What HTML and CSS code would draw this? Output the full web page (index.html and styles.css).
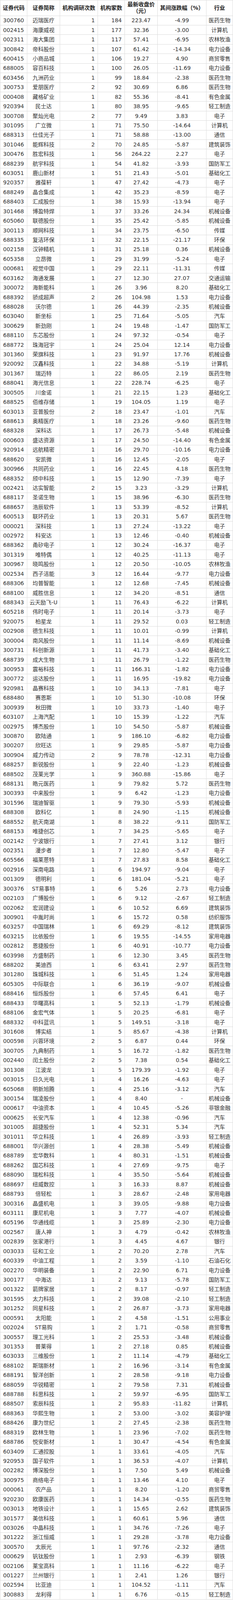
FILE: index.html
```html
<!DOCTYPE html>
<html lang="zh-CN">
<head>
<meta charset="utf-8">
<title>机构调研统计</title>
<link rel="stylesheet" href="styles.css">
</head>
<body>
<table class="survey">
<colgroup>
<col class="c-code"><col class="c-name"><col class="c-times"><col class="c-orgs"><col class="c-price"><col class="c-chg"><col class="c-ind">
</colgroup>
<thead>
<tr><th>证券代码</th><th>证券简称</th><th>机构调研次数</th><th>机构家数</th><th>最新收盘价（元）</th><th class="nowrap">其间涨跌幅（%）</th><th>行业</th></tr>
</thead>
<tbody>
<tr><td>300760</td><td>迈瑞医疗</td><td>1</td><td>184</td><td>223.47</td><td>-4.99</td><td>医药生物</td></tr>
<tr><td>002415</td><td>海康威视</td><td>1</td><td>177</td><td>32.36</td><td>-3.00</td><td>计算机</td></tr>
<tr><td>002311</td><td>海大集团</td><td>1</td><td>117</td><td>57.41</td><td>-6.95</td><td>农林牧渔</td></tr>
<tr><td>300842</td><td>帝科股份</td><td>1</td><td>107</td><td>61.42</td><td>-14.34</td><td>电力设备</td></tr>
<tr><td>600415</td><td>小商品城</td><td>1</td><td>106</td><td>19.27</td><td>4.90</td><td>商贸零售</td></tr>
<tr><td>688005</td><td>容百科技</td><td>1</td><td>100</td><td>26.05</td><td>-11.69</td><td>电力设备</td></tr>
<tr><td>603456</td><td>九洲药业</td><td>1</td><td>99</td><td>18.84</td><td>-2.38</td><td>医药生物</td></tr>
<tr><td>300753</td><td>爱朋医疗</td><td>2</td><td>92</td><td>30.69</td><td>6.86</td><td>医药生物</td></tr>
<tr><td>000408</td><td>藏格矿业</td><td>1</td><td>82</td><td>55.36</td><td>-8.41</td><td>有色金属</td></tr>
<tr><td>920394</td><td>民士达</td><td>1</td><td>80</td><td>38.95</td><td>-9.65</td><td>轻工制造</td></tr>
<tr><td>300708</td><td>聚灿光电</td><td>2</td><td>77</td><td>9.49</td><td>3.83</td><td>电子</td></tr>
<tr><td>301095</td><td>广立微</td><td>1</td><td>71</td><td>75.50</td><td>-14.64</td><td>计算机</td></tr>
<tr><td>688313</td><td>仕佳光子</td><td>1</td><td>71</td><td>58.88</td><td>-13.00</td><td>通信</td></tr>
<tr><td>301046</td><td>能辉科技</td><td>2</td><td>70</td><td>24.85</td><td>-5.87</td><td>建筑装饰</td></tr>
<tr><td>300476</td><td>胜宏科技</td><td>1</td><td>56</td><td>264.22</td><td>2.27</td><td>电子</td></tr>
<tr><td>688239</td><td>航宇科技</td><td>1</td><td>54</td><td>41.82</td><td>-3.93</td><td>国防军工</td></tr>
<tr><td>603051</td><td>鹿山新材</td><td>1</td><td>51</td><td>21.43</td><td>-5.01</td><td>基础化工</td></tr>
<tr><td>920357</td><td>雅葆轩</td><td>1</td><td>47</td><td>27.42</td><td>-4.73</td><td>电子</td></tr>
<tr><td>688249</td><td>晶合集成</td><td>1</td><td>42</td><td>35.23</td><td>-8.59</td><td>电子</td></tr>
<tr><td>688403</td><td>汇成股份</td><td>1</td><td>38</td><td>15.93</td><td>-13.94</td><td>电子</td></tr>
<tr><td>301468</td><td>博盈特焊</td><td>1</td><td>37</td><td>33.26</td><td>24.34</td><td>机械设备</td></tr>
<tr><td>605060</td><td>联德股份</td><td>1</td><td>35</td><td>25.42</td><td>-5.85</td><td>机械设备</td></tr>
<tr><td>300113</td><td>顺网科技</td><td>1</td><td>34</td><td>23.75</td><td>-6.50</td><td>传媒</td></tr>
<tr><td>688335</td><td>复洁环保</td><td>1</td><td>32</td><td>22.15</td><td>-21.17</td><td>环保</td></tr>
<tr><td>002158</td><td>汉钟精机</td><td>1</td><td>31</td><td>25.18</td><td>0.36</td><td>机械设备</td></tr>
<tr><td>605358</td><td>立昂微</td><td>1</td><td>29</td><td>31.99</td><td>-5.24</td><td>电子</td></tr>
<tr><td>000681</td><td>视觉中国</td><td>1</td><td>29</td><td>22.11</td><td>-11.31</td><td>传媒</td></tr>
<tr><td>603162</td><td>海通发展</td><td>1</td><td>27</td><td>12.30</td><td>27.07</td><td>交通运输</td></tr>
<tr><td>300072</td><td>海新能科</td><td>1</td><td>26</td><td>3.96</td><td>8.20</td><td>基础化工</td></tr>
<tr><td>688392</td><td>骄成超声</td><td>2</td><td>26</td><td>104.98</td><td>1.53</td><td>电力设备</td></tr>
<tr><td>688028</td><td>沃尔德</td><td>1</td><td>26</td><td>44.39</td><td>-2.35</td><td>机械设备</td></tr>
<tr><td>603040</td><td>新坐标</td><td>1</td><td>25</td><td>71.64</td><td>-5.05</td><td>汽车</td></tr>
<tr><td>300629</td><td>新劲刚</td><td>1</td><td>24</td><td>19.48</td><td>-1.47</td><td>国防军工</td></tr>
<tr><td>688110</td><td>东芯股份</td><td>1</td><td>24</td><td>97.32</td><td>-0.54</td><td>电子</td></tr>
<tr><td>688772</td><td>珠海冠宇</td><td>1</td><td>24</td><td>25.04</td><td>12.14</td><td>电力设备</td></tr>
<tr><td>301360</td><td>荣旗科技</td><td>1</td><td>23</td><td>91.97</td><td>17.76</td><td>机械设备</td></tr>
<tr><td>920092</td><td>汉鑫科技</td><td>1</td><td>22</td><td>34.88</td><td>-5.19</td><td>计算机</td></tr>
<tr><td>301367</td><td>瑞迈特</td><td>1</td><td>22</td><td>86.05</td><td>2.19</td><td>医药生物</td></tr>
<tr><td>688041</td><td>海光信息</td><td>1</td><td>22</td><td>228.74</td><td>-6.25</td><td>电子</td></tr>
<tr><td>300505</td><td>川金诺</td><td>1</td><td>21</td><td>22.15</td><td>1.23</td><td>基础化工</td></tr>
<tr><td>688525</td><td>佰维存储</td><td>1</td><td>19</td><td>104.05</td><td>1.19</td><td>电子</td></tr>
<tr><td>603013</td><td>亚普股份</td><td>2</td><td>18</td><td>23.47</td><td>-1.01</td><td>汽车</td></tr>
<tr><td>688613</td><td>奥精医疗</td><td>1</td><td>18</td><td>23.26</td><td>-9.60</td><td>医药生物</td></tr>
<tr><td>688328</td><td>深科达</td><td>1</td><td>17</td><td>26.73</td><td>-5.48</td><td>机械设备</td></tr>
<tr><td>000603</td><td>盛达资源</td><td>1</td><td>17</td><td>24.50</td><td>-14.40</td><td>有色金属</td></tr>
<tr><td>920914</td><td>远航精密</td><td>1</td><td>16</td><td>29.70</td><td>-10.16</td><td>电力设备</td></tr>
<tr><td>688620</td><td>安凯微</td><td>1</td><td>16</td><td>12.45</td><td>-2.05</td><td>电子</td></tr>
<tr><td>300966</td><td>共同药业</td><td>1</td><td>16</td><td>22.45</td><td>4.18</td><td>医药生物</td></tr>
<tr><td>688352</td><td>颀中科技</td><td>1</td><td>15</td><td>12.90</td><td>-7.39</td><td>电子</td></tr>
<tr><td>002421</td><td>达实智能</td><td>2</td><td>15</td><td>3.23</td><td>-3.29</td><td>计算机</td></tr>
<tr><td>688117</td><td>圣诺生物</td><td>1</td><td>15</td><td>38.96</td><td>-6.30</td><td>医药生物</td></tr>
<tr><td>688657</td><td>浩辰软件</td><td>1</td><td>13</td><td>53.39</td><td>-8.52</td><td>计算机</td></tr>
<tr><td>600513</td><td>联环药业</td><td>1</td><td>13</td><td>20.31</td><td>5.67</td><td>医药生物</td></tr>
<tr><td>000021</td><td>深科技</td><td>1</td><td>13</td><td>27.24</td><td>-13.22</td><td>电子</td></tr>
<tr><td>002972</td><td>科安达</td><td>1</td><td>13</td><td>12.46</td><td>-0.40</td><td>机械设备</td></tr>
<tr><td>688362</td><td>甬矽电子</td><td>1</td><td>12</td><td>30.24</td><td>-16.37</td><td>电子</td></tr>
<tr><td>301319</td><td>唯特偶</td><td>1</td><td>12</td><td>40.25</td><td>-11.13</td><td>电子</td></tr>
<tr><td>300967</td><td>晓鸣股份</td><td>1</td><td>12</td><td>20.50</td><td>-10.05</td><td>农林牧渔</td></tr>
<tr><td>002534</td><td>西子洁能</td><td>3</td><td>12</td><td>16.44</td><td>-9.77</td><td>电力设备</td></tr>
<tr><td>688306</td><td>均普智能</td><td>1</td><td>12</td><td>12.68</td><td>-7.45</td><td>机械设备</td></tr>
<tr><td>688100</td><td>威胜信息</td><td>1</td><td>12</td><td>34.20</td><td>-8.51</td><td>通信</td></tr>
<tr><td>688343</td><td>云天励飞-U</td><td>1</td><td>11</td><td>76.43</td><td>-6.22</td><td>计算机</td></tr>
<tr><td>605218</td><td>伟时电子</td><td>1</td><td>11</td><td>20.14</td><td>-3.73</td><td>电子</td></tr>
<tr><td>920075</td><td>柏星龙</td><td>1</td><td>11</td><td>29.52</td><td>0.03</td><td>轻工制造</td></tr>
<tr><td>002908</td><td>德生科技</td><td>1</td><td>11</td><td>10.01</td><td>-0.99</td><td>计算机</td></tr>
<tr><td>300004</td><td>南风股份</td><td>1</td><td>11</td><td>11.14</td><td>-8.69</td><td>机械设备</td></tr>
<tr><td>300731</td><td>科创新源</td><td>1</td><td>11</td><td>41.73</td><td>-3.40</td><td>基础化工</td></tr>
<tr><td>688739</td><td>成大生物</td><td>1</td><td>11</td><td>26.79</td><td>-1.22</td><td>医药生物</td></tr>
<tr><td>300953</td><td>震裕科技</td><td>1</td><td>11</td><td>166.31</td><td>-1.82</td><td>电力设备</td></tr>
<tr><td>300772</td><td>运达股份</td><td>1</td><td>11</td><td>16.95</td><td>-19.82</td><td>电力设备</td></tr>
<tr><td>920981</td><td>晶赛科技</td><td>1</td><td>10</td><td>34.13</td><td>-7.81</td><td>电子</td></tr>
<tr><td>688480</td><td>赛恩斯</td><td>1</td><td>10</td><td>51.30</td><td>-10.08</td><td>环保</td></tr>
<tr><td>300939</td><td>秋田微</td><td>1</td><td>10</td><td>33.73</td><td>-1.40</td><td>电子</td></tr>
<tr><td>603107</td><td>上海汽配</td><td>1</td><td>10</td><td>15.39</td><td>-1.22</td><td>汽车</td></tr>
<tr><td>002975</td><td>博杰股份</td><td>1</td><td>10</td><td>54.50</td><td>-5.87</td><td>机械设备</td></tr>
<tr><td>300870</td><td>欧陆通</td><td>1</td><td>9</td><td>186.10</td><td>-6.82</td><td>电力设备</td></tr>
<tr><td>300207</td><td>欣旺达</td><td>1</td><td>9</td><td>29.85</td><td>-5.87</td><td>电力设备</td></tr>
<tr><td>300904</td><td>威力传动</td><td>2</td><td>9</td><td>78.78</td><td>-12.31</td><td>电力设备</td></tr>
<tr><td>688257</td><td>新锐股份</td><td>1</td><td>9</td><td>22.40</td><td>-1.23</td><td>机械设备</td></tr>
<tr><td>688502</td><td>茂莱光学</td><td>1</td><td>9</td><td>360.88</td><td>-15.86</td><td>电子</td></tr>
<tr><td>688131</td><td>皓元医药</td><td>1</td><td>9</td><td>79.82</td><td>5.72</td><td>医药生物</td></tr>
<tr><td>300393</td><td>中来股份</td><td>1</td><td>9</td><td>6.42</td><td>-1.23</td><td>电力设备</td></tr>
<tr><td>301596</td><td>瑞迪智驱</td><td>1</td><td>9</td><td>79.30</td><td>-5.93</td><td>机械设备</td></tr>
<tr><td>688308</td><td>欧科亿</td><td>1</td><td>8</td><td>24.90</td><td>-1.15</td><td>机械设备</td></tr>
<tr><td>688552</td><td>航天南湖</td><td>1</td><td>8</td><td>38.22</td><td>-9.11</td><td>国防军工</td></tr>
<tr><td>688153</td><td>唯捷创芯</td><td>1</td><td>7</td><td>34.25</td><td>-5.65</td><td>电子</td></tr>
<tr><td>002142</td><td>宁波银行</td><td>1</td><td>7</td><td>27.41</td><td>3.12</td><td>银行</td></tr>
<tr><td>002351</td><td>漫步者</td><td>1</td><td>7</td><td>12.80</td><td>-5.47</td><td>电子</td></tr>
<tr><td>605566</td><td>福莱蒽特</td><td>1</td><td>7</td><td>27.83</td><td>8.58</td><td>基础化工</td></tr>
<tr><td>002916</td><td>深南电路</td><td>1</td><td>6</td><td>194.97</td><td>-9.04</td><td>电子</td></tr>
<tr><td>001309</td><td>德明利</td><td>1</td><td>6</td><td>181.04</td><td>-5.21</td><td>电子</td></tr>
<tr><td>300376</td><td>ST易事特</td><td>1</td><td>6</td><td>5.26</td><td>2.73</td><td>电力设备</td></tr>
<tr><td>002103</td><td>广博股份</td><td>1</td><td>6</td><td>9.12</td><td>-2.67</td><td>轻工制造</td></tr>
<tr><td>002062</td><td>宏润建设</td><td>1</td><td>6</td><td>10.52</td><td>6.69</td><td>建筑装饰</td></tr>
<tr><td>300901</td><td>中胤时尚</td><td>1</td><td>6</td><td>15.72</td><td>0.58</td><td>纺织服饰</td></tr>
<tr><td>603257</td><td>中国瑞林</td><td>1</td><td>6</td><td>69.29</td><td>-8.12</td><td>建筑装饰</td></tr>
<tr><td>603215</td><td>比依股份</td><td>1</td><td>6</td><td>19.55</td><td>-14.55</td><td>家用电器</td></tr>
<tr><td>002812</td><td>恩捷股份</td><td>1</td><td>6</td><td>40.91</td><td>-10.77</td><td>电力设备</td></tr>
<tr><td>603998</td><td>方盛制药</td><td>1</td><td>6</td><td>12.30</td><td>3.45</td><td>医药生物</td></tr>
<tr><td>688202</td><td>美迪西</td><td>1</td><td>6</td><td>63.41</td><td>2.97</td><td>医药生物</td></tr>
<tr><td>301280</td><td>珠城科技</td><td>1</td><td>6</td><td>51.45</td><td>1.24</td><td>家用电器</td></tr>
<tr><td>605305</td><td>中际联合</td><td>1</td><td>6</td><td>36.19</td><td>-9.07</td><td>机械设备</td></tr>
<tr><td>688416</td><td>恒烁股份</td><td>1</td><td>6</td><td>57.45</td><td>6.41</td><td>电子</td></tr>
<tr><td>688433</td><td>华曙高科</td><td>1</td><td>5</td><td>52.13</td><td>-1.79</td><td>机械设备</td></tr>
<tr><td>688106</td><td>金宏气体</td><td>1</td><td>5</td><td>20.25</td><td>-6.81</td><td>电子</td></tr>
<tr><td>688332</td><td>中科蓝讯</td><td>1</td><td>5</td><td>149.51</td><td>-3.18</td><td>电子</td></tr>
<tr><td>301608</td><td>博实结</td><td>1</td><td>5</td><td>85.67</td><td>-4.38</td><td>计算机</td></tr>
<tr><td>000598</td><td>兴蓉环境</td><td>2</td><td>5</td><td>6.87</td><td>0.44</td><td>环保</td></tr>
<tr><td>300705</td><td>九典制药</td><td>1</td><td>5</td><td>16.72</td><td>-1.82</td><td>医药生物</td></tr>
<tr><td>002440</td><td>闰土股份</td><td>2</td><td>5</td><td>7.38</td><td>0.54</td><td>基础化工</td></tr>
<tr><td>301308</td><td>江波龙</td><td>1</td><td>5</td><td>179.39</td><td>-1.92</td><td>电子</td></tr>
<tr><td>003015</td><td>日久光电</td><td>1</td><td>4</td><td>16.26</td><td>-4.63</td><td>电子</td></tr>
<tr><td>605068</td><td>明新旭腾</td><td>1</td><td>4</td><td>25.16</td><td>-3.12</td><td>汽车</td></tr>
<tr><td>300154</td><td>瑞凌股份</td><td>1</td><td>4</td><td>8.40</td><td>-</td><td>机械设备</td></tr>
<tr><td>000617</td><td>中油资本</td><td>1</td><td>4</td><td>10.45</td><td>-5.26</td><td>非银金融</td></tr>
<tr><td>000625</td><td>长安汽车</td><td>1</td><td>4</td><td>12.38</td><td>-0.96</td><td>汽车</td></tr>
<tr><td>301005</td><td>超捷股份</td><td>1</td><td>4</td><td>52.31</td><td>5.34</td><td>汽车</td></tr>
<tr><td>301011</td><td>华立科技</td><td>1</td><td>4</td><td>26.89</td><td>-3.93</td><td>轻工制造</td></tr>
<tr><td>688001</td><td>华兴源创</td><td>1</td><td>4</td><td>28.38</td><td>-5.49</td><td>机械设备</td></tr>
<tr><td>688789</td><td>宏华数科</td><td>1</td><td>4</td><td>80.31</td><td>-1.51</td><td>机械设备</td></tr>
<tr><td>688262</td><td>国芯科技</td><td>1</td><td>4</td><td>27.69</td><td>-9.75</td><td>电子</td></tr>
<tr><td>688090</td><td>瑞松科技</td><td>1</td><td>4</td><td>35.50</td><td>-5.64</td><td>机械设备</td></tr>
<tr><td>688697</td><td>纽威数控</td><td>1</td><td>3</td><td>16.33</td><td>8.87</td><td>机械设备</td></tr>
<tr><td>688793</td><td>倍轻松</td><td>1</td><td>3</td><td>28.67</td><td>-2.48</td><td>家用电器</td></tr>
<tr><td>300316</td><td>晶盛机电</td><td>1</td><td>3</td><td>39.05</td><td>-9.88</td><td>电力设备</td></tr>
<tr><td>603111</td><td>康尼机电</td><td>1</td><td>3</td><td>7.77</td><td>-4.07</td><td>机械设备</td></tr>
<tr><td>605196</td><td>华通线缆</td><td>1</td><td>3</td><td>25.89</td><td>-2.30</td><td>电力设备</td></tr>
<tr><td>002567</td><td>唐人神</td><td>1</td><td>3</td><td>4.79</td><td>-0.42</td><td>农林牧渔</td></tr>
<tr><td>002839</td><td>张家港行</td><td>1</td><td>3</td><td>4.45</td><td>4.67</td><td>银行</td></tr>
<tr><td>003033</td><td>征和工业</td><td>1</td><td>2</td><td>70.20</td><td>2.78</td><td>汽车</td></tr>
<tr><td>600339</td><td>中油工程</td><td>1</td><td>2</td><td>3.59</td><td>-1.10</td><td>石油石化</td></tr>
<tr><td>002270</td><td>华明装备</td><td>1</td><td>2</td><td>22.90</td><td>6.71</td><td>电力设备</td></tr>
<tr><td>300177</td><td>中海达</td><td>1</td><td>2</td><td>9.13</td><td>-5.78</td><td>国防军工</td></tr>
<tr><td>001322</td><td>箭牌家居</td><td>1</td><td>2</td><td>8.17</td><td>-0.97</td><td>轻工制造</td></tr>
<tr><td>301595</td><td>太力科技</td><td>1</td><td>2</td><td>39.08</td><td>-2.10</td><td>轻工制造</td></tr>
<tr><td>301252</td><td>同星科技</td><td>1</td><td>2</td><td>26.87</td><td>-3.73</td><td>家用电器</td></tr>
<tr><td>000591</td><td>太阳能</td><td>1</td><td>2</td><td>4.58</td><td>-1.51</td><td>公用事业</td></tr>
<tr><td>002024</td><td>ST易购</td><td>1</td><td>2</td><td>1.71</td><td>-0.58</td><td>商贸零售</td></tr>
<tr><td>300557</td><td>理工光科</td><td>1</td><td>2</td><td>25.53</td><td>-3.48</td><td>机械设备</td></tr>
<tr><td>301353</td><td>普莱得</td><td>1</td><td>2</td><td>27.18</td><td>0.85</td><td>机械设备</td></tr>
<tr><td>603033</td><td>三维股份</td><td>1</td><td>2</td><td>11.14</td><td>-4.79</td><td>基础化工</td></tr>
<tr><td>688102</td><td>斯瑞新材</td><td>1</td><td>2</td><td>16.96</td><td>-3.14</td><td>有色金属</td></tr>
<tr><td>688191</td><td>智洋创新</td><td>1</td><td>2</td><td>28.58</td><td>-9.18</td><td>电力设备</td></tr>
<tr><td>688059</td><td>华锐精密</td><td>1</td><td>2</td><td>79.58</td><td>7.31</td><td>机械设备</td></tr>
<tr><td>688788</td><td>科思科技</td><td>1</td><td>2</td><td>59.97</td><td>-6.95</td><td>国防军工</td></tr>
<tr><td>688507</td><td>索辰科技</td><td>1</td><td>2</td><td>95.83</td><td>-11.82</td><td>计算机</td></tr>
<tr><td>688363</td><td>华熙生物</td><td>1</td><td>2</td><td>53.00</td><td>-3.02</td><td>美容护理</td></tr>
<tr><td>688426</td><td>康为世纪</td><td>1</td><td>2</td><td>27.45</td><td>-2.38</td><td>医药生物</td></tr>
<tr><td>688319</td><td>欧林生物</td><td>1</td><td>1</td><td>23.96</td><td>-7.02</td><td>医药生物</td></tr>
<tr><td>688786</td><td>悦安新材</td><td>1</td><td>1</td><td>30.47</td><td>-4.54</td><td>有色金属</td></tr>
<tr><td>603409</td><td>汇通控股</td><td>1</td><td>1</td><td>33.61</td><td>-4.05</td><td>汽车</td></tr>
<tr><td>920953</td><td>国子软件</td><td>1</td><td>1</td><td>36.53</td><td>-4.07</td><td>计算机</td></tr>
<tr><td>002282</td><td>博深股份</td><td>1</td><td>1</td><td>7.50</td><td>5.49</td><td>机械设备</td></tr>
<tr><td>300975</td><td>商络电子</td><td>1</td><td>1</td><td>13.46</td><td>4.10</td><td>电子</td></tr>
<tr><td>000061</td><td>农产品</td><td>1</td><td>1</td><td>8.20</td><td>-1.20</td><td>商贸零售</td></tr>
<tr><td>920230</td><td>欧康医药</td><td>1</td><td>1</td><td>14.34</td><td>-0.55</td><td>医药生物</td></tr>
<tr><td>003013</td><td>地铁设计</td><td>1</td><td>1</td><td>15.65</td><td>2.62</td><td>建筑装饰</td></tr>
<tr><td>301577</td><td>美信科技</td><td>1</td><td>1</td><td>60.61</td><td>5.96</td><td>通信</td></tr>
<tr><td>003026</td><td>中晶科技</td><td>1</td><td>1</td><td>34.76</td><td>-7.26</td><td>电子</td></tr>
<tr><td>301222</td><td>浙江恒威</td><td>1</td><td>1</td><td>29.28</td><td>-3.78</td><td>电力设备</td></tr>
<tr><td>300570</td><td>太辰光</td><td>1</td><td>1</td><td>97.76</td><td>-2.32</td><td>通信</td></tr>
<tr><td>000629</td><td>钒钛股份</td><td>1</td><td>1</td><td>2.93</td><td>-6.39</td><td>钢铁</td></tr>
<tr><td>002106</td><td>莱宝高科</td><td>1</td><td>1</td><td>11.16</td><td>-6.22</td><td>电子</td></tr>
<tr><td>001227</td><td>兰州银行</td><td>1</td><td>1</td><td>2.41</td><td>1.26</td><td>银行</td></tr>
<tr><td>002594</td><td>比亚迪</td><td>1</td><td>1</td><td>104.52</td><td>-1.11</td><td>汽车</td></tr>
<tr><td>300883</td><td>龙利得</td><td>1</td><td>1</td><td>6.76</td><td>-0.15</td><td>轻工制造</td></tr>
</tbody>
</table>
</body>
</html>
```

FILE: styles.css
```css
html, body {
  margin: 0;
  padding: 0;
  background: #ffffff;
}

body {
  font-family: "DejaVu Sans", "Noto Sans CJK SC", sans-serif;
  font-size: 14px;
  color: #333333;
}

.survey {
  width: 596px;
  border-collapse: collapse;
  table-layout: fixed;
}

.c-code { width: 69px; }
.c-name { width: 84px; }
.c-times { width: 97px; }
.c-orgs { width: 69px; }
.c-price { width: 84px; }
.c-chg { width: 125px; }
.c-ind { width: 68px; }

.survey th,
.survey td {
  border: 1px solid #dcdcdc;
}

.survey thead tr {
  height: calc((100vh - 1px) * 47 / 4861);
}

.survey th {
  padding: 0 2px;
  line-height: 17px;
  font-weight: bold;
  color: #222222;
  text-align: center;
  vertical-align: middle;
}

.survey th.nowrap {
  white-space: nowrap;
}

.survey tbody tr {
  height: calc((100vh - 1px) * 29 / 4861);
}

.survey td {
  padding: 0 7px;
  line-height: 14px;
  white-space: nowrap;
  text-align: center;
  vertical-align: middle;
}

.survey td:nth-child(1) {
  text-align: left;
}

.survey td:nth-child(3),
.survey td:nth-child(4) {
  text-align: right;
}

.survey td:nth-child(2),
.survey td:nth-child(7) {
  padding: 0 2px;
}
```
